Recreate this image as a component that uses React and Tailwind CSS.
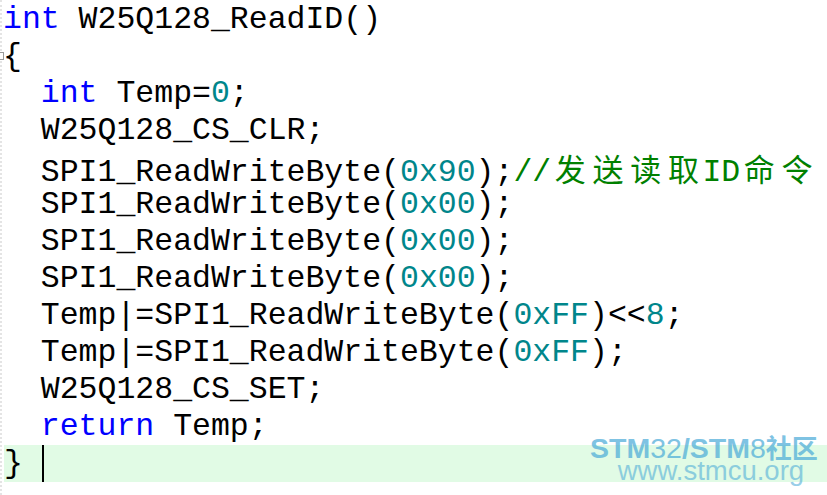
import React from "react";

const K = ({ children }) => <span className="text-[#0000ff]">{children}</span>;
const N = ({ children }) => <span className="text-[#00868b]">{children}</span>;
const Z = ({ children }) => (
  <span className="inline-block w-[37.8px] text-center font-['Noto_Sans_CJK_SC',sans-serif] text-[31px] font-normal leading-[37px]">
    {children}
  </span>
);
const C = ({ children }) => (
  <span className="text-[#008000]">{children}</span>
);

const lines = [
  <>
    <K>int</K> W25Q128_ReadID()
  </>,
  <>{"{"}</>,
  <>
    {"  "}
    <K>int</K> Temp=<N>0</N>;
  </>,
  <>{"  "}W25Q128_CS_CLR;</>,
  <>
    {"  "}SPI1_ReadWriteByte(<N>0x90</N>);
    <C>
      //<Z>发</Z>
      <Z>送</Z>
      <Z>读</Z>
      <Z>取</Z>ID<Z>命</Z>
      <Z>令</Z>
    </C>
  </>,
  <>
    {"  "}SPI1_ReadWriteByte(<N>0x00</N>);
  </>,
  <>
    {"  "}SPI1_ReadWriteByte(<N>0x00</N>);
  </>,
  <>
    {"  "}SPI1_ReadWriteByte(<N>0x00</N>);
  </>,
  <>
    {"  "}Temp|=SPI1_ReadWriteByte(<N>0xFF</N>){"<<"}
    <N>8</N>;
  </>,
  <>
    {"  "}Temp|=SPI1_ReadWriteByte(<N>0xFF</N>);
  </>,
  <>{"  "}W25Q128_CS_SET;</>,
  <>
    {"  "}
    <K>return</K> Temp;
  </>,
];

export default function App() {
  return (
    <div className="relative w-[827px] h-[495px] overflow-hidden bg-white font-['Liberation_Mono',monospace] text-[31.5px] text-black">
      <div className="absolute left-0 top-0 h-full w-[2px] border-l-2 border-dotted border-[#e4e4e4]" />
      <div className="absolute left-0 top-[52px] h-[8px] w-[4px] border border-l-0 border-[#9a9a9a] bg-white" />
      <div className="flex flex-col pt-[1px]">
        {lines.map((l, i) => (
          <div
            key={i}
            className="h-[37px] leading-[37px] whitespace-pre pl-[3px]"
          >
            {l}
          </div>
        ))}
        <div className="ml-[4px] flex h-[37px] items-stretch bg-[#e1fbe5] leading-[37px] whitespace-pre">
          <span>{"} "}</span>
          <span className="w-[2px] bg-black" />
        </div>
      </div>
      <div className="absolute left-[590px] top-[434px] flex flex-col items-center font-['Liberation_Sans',sans-serif] text-[#4aaad8] opacity-70">
        <div className="h-[26px] text-[28.5px] leading-[26px] whitespace-nowrap">
          <span className="font-bold">STM</span>
          <span>32</span>
          <span className="font-bold">/STM</span>
          <span>8</span>
          <span className="font-bold font-['Noto_Sans_CJK_SC',sans-serif] text-[26px]">社区</span>
        </div>
        <div className="ml-[14px] h-[22px] text-[27.5px] leading-[22px] whitespace-nowrap opacity-80">
          www.stmcu.org
        </div>
      </div>
    </div>
  );
}
